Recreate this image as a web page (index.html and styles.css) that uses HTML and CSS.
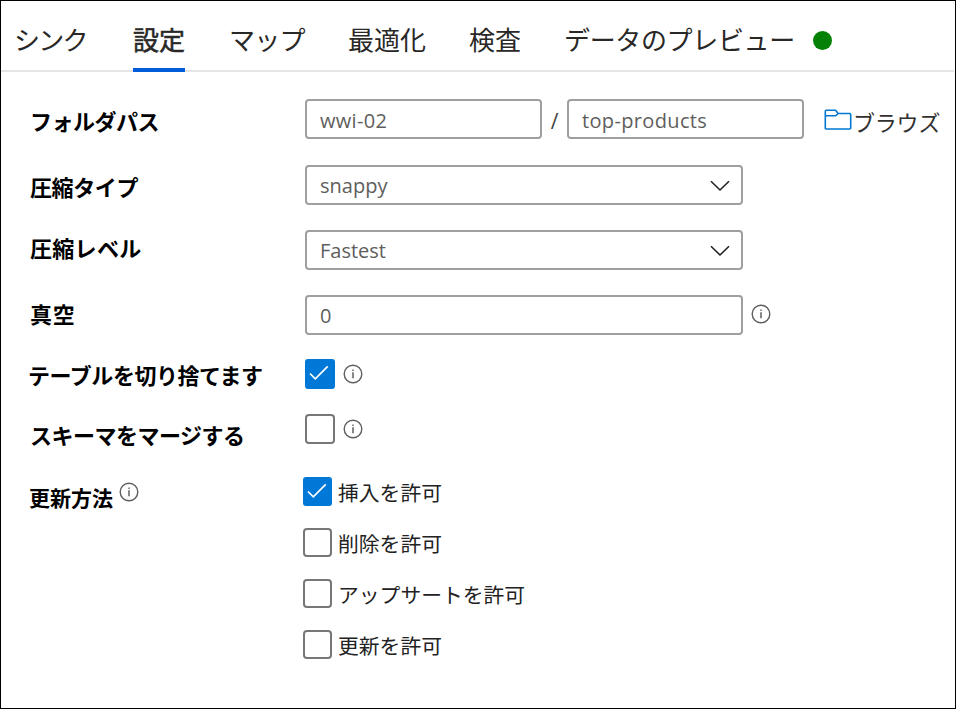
FILE: index.html
```html
<!DOCTYPE html>
<html lang="ja">
<head>
<meta charset="utf-8">
<title>設定</title>
<link rel="stylesheet" href="styles.css">
</head>
<body>
<svg class="defs" width="0" height="0">
  <symbol id="info" viewBox="0 0 20 20"><circle cx="10" cy="10" r="8.8" fill="none" stroke="currentColor" stroke-width="1.4"/><path d="M10 8.2v6" stroke="currentColor" stroke-width="1.5"/><path d="M10 5.6v1.3" stroke="currentColor" stroke-width="1.4"/></symbol>
  <symbol id="chevron" viewBox="0 0 20 12"><path d="M1 1.2l9 8.8 9-8.8" fill="none" stroke="#222" stroke-width="1.6"/></symbol>
  <symbol id="check" viewBox="0 0 20 16"><path d="M1 8.500l5.3 5.300L18.700 1.300" fill="none" stroke="#fff" stroke-width="1.7"/></symbol>
</svg>
<main class="panel">
  <nav class="tabs">
    <a class="tab tab-sink">シンク</a>
    <a class="tab tab-active">設定</a>
    <a class="tab tab-map">マップ</a>
    <a class="tab tab-opt">最適化</a>
    <a class="tab tab-inspect">検査</a>
    <a class="tab tab-preview">データのプレビュー</a>
    <i class="status"></i>
  </nav>
  <form class="form">
    <div class="row">
      <span class="label folder-label">フォルダパス</span>
      <div class="field half"><span class="w-container">wwi-02</span></div>
      <span class="slash">/</span>
      <div class="field half"><span class="w-folder">top-products</span></div>
      <a class="browse"><svg width="28" height="22" viewBox="0 0 28 22" fill="none" stroke="#0078d4" stroke-width="1.6" stroke-linejoin="round"><path d="M1.300 20V2.200Q1.300 1.200 2.300 1.200H11.500L14.300 4.500H25.700Q26.700 4.500 26.700 5.500V19Q26.700 20 25.700 20H2.300Q1.300 20 1.300 19M1.300 6.800H11.500L14.300 4.500"/></svg><span>ブラウズ</span></a>
    </div>
    <div class="row">
      <span class="label type-label">圧縮タイプ</span>
      <div class="field"><span class="w-snappy">snappy</span><svg width="20" height="12"><use href="#chevron"/></svg></div>
    </div>
    <div class="row">
      <span class="label level-label">圧縮レベル</span>
      <div class="field"><span class="w-fastest">Fastest</span><svg width="20" height="12"><use href="#chevron"/></svg></div>
    </div>
    <div class="row">
      <span class="label vacuum-label">真空</span>
      <div class="field"><span class="w-zero">0</span></div>
      <svg class="info vacuum-info" width="20" height="20"><use href="#info"/></svg>
    </div>
    <div class="row check-row first-check">
      <span class="label truncate-label">テーブルを切り捨てます</span>
      <span class="box on"><svg width="20" height="16"><use href="#check"/></svg></span>
      <svg class="info" width="20" height="20"><use href="#info"/></svg>
    </div>
    <div class="row check-row">
      <span class="label merge-label">スキーマをマージする</span>
      <span class="box"></span>
      <svg class="info" width="20" height="20"><use href="#info"/></svg>
    </div>
    <div class="row method-row">
      <span class="label method-label"><span>更新方法</span><svg width="20" height="20"><use href="#info"/></svg></span>
      <div class="options">
        <label class="option"><span class="box on"><svg width="20" height="16"><use href="#check"/></svg></span><span>挿入を許可</span></label>
        <label class="option"><span class="box"></span><span>削除を許可</span></label>
        <label class="option"><span class="box"></span><span>アップサートを許可</span></label>
        <label class="option"><span class="box"></span><span>更新を許可</span></label>
      </div>
    </div>
  </form>
</main>
</body>
</html>
```
FILE: styles.css
```css
* { box-sizing: border-box; }
body { margin: 0; background: #fff; color: #222; font-family: "Noto Sans CJK JP", sans-serif; }
.defs { display: block; height: 0; }
svg { flex: none; }
.panel { width: 956px; height: 709px; border: 1px solid #000; overflow: hidden; }
.tabs { display: flex; height: 71px; margin-right: 1px; padding-left: 13px; border-bottom: 2px solid #e5e5e5; color: #292827; font-size: 26px; line-height: 75px; white-space: nowrap; }
.tab { flex: none; height: 71px; }
.tab-sink { width: 119px; letter-spacing: -1.8px; }
.tab-active { width: 52px; margin-right: 44px; border-bottom: 4px solid #015cda; -webkit-text-stroke: .5px #292827; }
.tab-map { width: 119px; letter-spacing: -.7px; }
.tab-opt { width: 121px; }
.tab-inspect { width: 95px; }
.tab-preview { width: 249px; letter-spacing: -.35px; }
.status { width: 19px; height: 19px; margin-top: 30px; border-radius: 50%; background: #058205; }
.form { display: flex; flex-direction: column; padding: 27px 0 0 29px; }
.row { display: flex; align-items: center; height: 40px; margin-bottom: 25px; }
.row:first-child { margin-bottom: 26px; }
.label { flex: none; width: 275px; color: #000; font-size: 22px; font-weight: 700; line-height: 32px; white-space: nowrap; position: relative; }
.folder-label { top: 1px; letter-spacing: -.5px; }
.type-label { top: 1px; letter-spacing: -.4px; }
.level-label { top: -3px; letter-spacing: .3px; }
.vacuum-label { top: -2px; letter-spacing: .8px; }
.truncate-label { top: 0; left: -2px; letter-spacing: -.45px; }
.merge-label { top: 5px; letter-spacing: -.5px; }
.field { display: flex; align-items: center; justify-content: space-between; width: 438px; height: 40px; padding: 0 11px 0 13px; border: 2px solid #a19f9d; border-radius: 4px; color: #605e5c; font-family: "Open Sans", "Noto Sans", sans-serif; font-size: 20px; line-height: 28px; }
.field span { padding-top: 2px; }
.field svg { position: relative; top: 1px; }
.w-container { letter-spacing: .3px; position: relative; top: 1px; }
.w-folder { letter-spacing: .35px; position: relative; top: 1px; }
.half { width: 237px; }
.slash { width: 25px; text-align: center; color: #444; font-family: "Open Sans", sans-serif; font-size: 21px; padding-top: 3px; }
.browse { display: flex; align-items: center; margin-left: 20px; color: #323130; font-size: 22px; line-height: 32px; white-space: nowrap; }
.browse span { margin-left: 1px; padding-top: 3px; letter-spacing: -.2px; }
.browse svg { position: relative; top: 1px; }
.info { margin-left: 8px; color: #605e5c; }
.vacuum-info { position: relative; top: -1px; }
.check-row { height: 30px; }
.first-check { margin-top: -1px; }
.box { display: flex; flex: none; align-items: center; justify-content: center; width: 30px; height: 30px; border: 2px solid #797775; border-radius: 4px; }
.box svg { position: relative; left: -1px; top: -1px; }
.on { border-color: #0078d7; background: #0078d7; border-radius: 3px; }
.method-row { align-items: flex-start; height: 190px; margin: 8px 0 0; }
.method-label { display: flex; width: 273px; left: -1px; top: 5px; font-size: 21px; }
.method-label span { margin-top: -1px; }
.method-label svg { margin-left: 6px; color: #605e5c; }
.options { display: grid; gap: 22px; }
.option { display: flex; align-items: center; height: 29px; font-size: 20.8px; line-height: 29px; }
.option .box { width: 29px; height: 29px; margin-right: 6px; }
.option > span:last-child { padding-top: 2px; }
```
